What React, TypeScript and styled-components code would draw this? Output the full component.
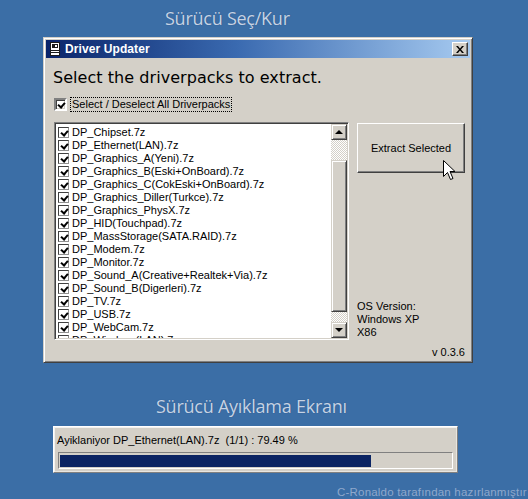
import React from "react";
import styled, { createGlobalStyle } from "styled-components";

const driverpacks: string[] = [
	"DP_Chipset.7z",
	"DP_Ethernet(LAN).7z",
	"DP_Graphics_A(Yeni).7z",
	"DP_Graphics_B(Eski+OnBoard).7z",
	"DP_Graphics_C(CokEski+OnBoard).7z",
	"DP_Graphics_Diller(Turkce).7z",
	"DP_Graphics_PhysX.7z",
	"DP_HID(Touchpad).7z",
	"DP_MassStorage(SATA.RAID).7z",
	"DP_Modem.7z",
	"DP_Monitor.7z",
	"DP_Sound_A(Creative+Realtek+Via).7z",
	"DP_Sound_B(Digerleri).7z",
	"DP_TV.7z",
	"DP_USB.7z",
	"DP_WebCam.7z",
	"DP_Wireless(LAN).7z",
];

const progress = 79.49;

function App() {
	return (
		<>
			<GlobalStyle />
			<Page>
				<SectionTitle $indent={165} $top={7} $bottom={8}>
					Sürücü Seç/Kur
				</SectionTitle>

				<Window>
					<TitleBar>
						<AppIcon width="10" height="14" viewBox="0 0 10 14">
							<rect x="0.5" y="0.5" width="9" height="13" fill="#fff" stroke="#1c1c1c" />
							<rect x="2" y="2" width="6" height="4" fill="#1c1c1c" />
							<rect x="5" y="3" width="2" height="2" fill="#fff" />
							<line x1="1" y1="8.5" x2="9" y2="8.5" stroke="#1c1c1c" />
							<line x1="1" y1="10.5" x2="9" y2="10.5" stroke="#1c1c1c" />
						</AppIcon>
						<TitleText>Driver Updater</TitleText>
						<CloseButton>
							<svg width="8" height="7" viewBox="0 0 8 7">
								<path d="M0 0h2l2 2.5L6 0h2L5 3.5 8 7H6L4 4.5 2 7H0l3-3.5z" fill="#000" />
							</svg>
						</CloseButton>
					</TitleBar>

					<Body>
						<Heading>Select the driverpacks to extract.</Heading>

						<SelectAllRow>
							<CheckBox $size={13} $checked />
							<FocusLabel>Select / Deselect All Driverpacks</FocusLabel>
						</SelectAllRow>

						<Content>
							<ListBox>
								<ListItems>
									{driverpacks.map((name) => (
										<ListRow key={name}>
											<CheckBox $size={11} $checked $flat />
											<span>{name}</span>
										</ListRow>
									))}
								</ListItems>
								<ScrollBar>
									<ScrollArrow $dir="up" />
									<ScrollTrack $size={20} />
									<ScrollThumb $size={152} />
									<ScrollTrack $size={10} />
									<ScrollArrow $dir="down" />
								</ScrollBar>
							</ListBox>

							<Side>
								<ExtractButton>Extract Selected</ExtractButton>
								<Cursor width="13" height="20" viewBox="0 0 13 20">
									<path
										d="M0.5 0.5 L0.5 16.5 L4.5 12.5 L7.5 19.5 L10 18.5 L7 11.5 L12 11.5 Z"
										fill="#fff"
										stroke="#000"
										strokeLinejoin="miter"
									/>
								</Cursor>
								<OsInfo>
									<div>OS Version:</div>
									<div>Windows XP</div>
									<div>X86</div>
								</OsInfo>
								<Version>v 0.3.6</Version>
							</Side>
						</Content>
					</Body>
				</Window>

				<SectionTitle $indent={156} $top={32} $bottom={9}>
					Sürücü Ayıklama Ekranı
				</SectionTitle>

				<ProgressPanel>
					<ProgressText>Ayiklaniyor DP_Ethernet(LAN).7z  (1/1) : 79.49 %</ProgressText>
					<ProgressBar>
						<ProgressFill $percent={progress} />
					</ProgressBar>
				</ProgressPanel>

				<Credit>C-Ronaldo tarafından hazırlanmıştır</Credit>
			</Page>
		</>
	);
}

const GlobalStyle = createGlobalStyle`
	html, body {
		margin: 0;
		padding: 0;
		background: #3a6ea5;
		overflow: hidden;
	}
	body {
		font-family: "Liberation Sans", Arial, sans-serif;
	}
`;

const Page = styled.div`
	width: 528px;
	height: 499px;
	display: flex;
	flex-direction: column;
	background: #3b6ea6;
	overflow: hidden;
`;

const SectionTitle = styled.div<{ $indent: number; $top: number; $bottom: number }>`
	padding-left: ${(p) => p.$indent}px;
	margin-top: ${(p) => p.$top}px;
	margin-bottom: ${(p) => p.$bottom}px;
	font-family: "Open Sans", "Noto Sans", sans-serif;
	font-size: 18px;
	line-height: 22px;
	letter-spacing: -0.25px;
	color: #c6d3e5;
	text-shadow: 0 0 1px rgba(20, 50, 90, 0.5);
	white-space: nowrap;
`;

const Window = styled.div`
	margin-left: 43px;
	width: 430px;
	height: 328px;
	box-sizing: border-box;
	display: flex;
	flex-direction: column;
	background: #d4d0c8;
	border: 1px solid;
	border-color: #d4d0c8 #404040 #404040 #d4d0c8;
	box-shadow: inset 1px 1px #ffffff, inset -1px -1px #808080;
	padding: 2px;
	overflow: hidden;
`;

const TitleBar = styled.div`
	height: 18px;
	flex: none;
	display: flex;
	align-items: center;
	padding: 0 2px 0 4px;
	background: linear-gradient(to right, #0a246a 0%, #3a6ab0 45%, #a6caf0 100%);
`;

const AppIcon = styled.svg`
	flex: none;
	margin-right: 5px;
`;

const TitleText = styled.span`
	flex: 1;
	color: #ffffff;
	font-family: "Liberation Sans", Arial, sans-serif;
	font-weight: bold;
	font-size: 12px;
	letter-spacing: 0.1px;
`;

const CloseButton = styled.div`
	width: 16px;
	height: 14px;
	box-sizing: border-box;
	display: flex;
	align-items: center;
	justify-content: center;
	background: #d4d0c8;
	border: 1px solid;
	border-color: #ffffff #404040 #404040 #ffffff;
	box-shadow: inset -1px -1px #808080;
`;

const Body = styled.div`
	flex: 1;
	display: flex;
	flex-direction: column;
	padding: 9px 4px 0 7px;
	color: #000;
	font-size: 11px;
`;

const Heading = styled.div`
	font-family: "DejaVu Sans", Verdana, sans-serif;
	font-size: 16px;
	line-height: 22px;
	letter-spacing: 0.05px;
	white-space: nowrap;
`;

const SelectAllRow = styled.div`
	display: flex;
	align-items: center;
	height: 13px;
	margin: 9px 0 11px 1px;
	gap: 4px;
`;

const CheckBox = styled.span<{ $size: number; $checked?: boolean; $flat?: boolean }>`
	flex: none;
	position: relative;
	width: ${(p) => p.$size}px;
	height: ${(p) => p.$size}px;
	box-sizing: border-box;
	background: #ffffff;
	border: ${(p) => (p.$flat ? 1 : 2)}px solid;
	border-color: ${(p) =>
		p.$flat ? "#404040 #909090 #909090 #404040" : "#808080 #ffffff #ffffff #808080"};
	box-shadow: ${(p) => (p.$flat ? "none" : "inset 1px 1px #404040, inset -1px -1px #d4d0c8")};

	&::after {
		content: "";
		display: ${(p) => (p.$checked ? "block" : "none")};
		position: absolute;
		left: 2.5px;
		top: 0.5px;
		width: 3px;
		height: 5px;
		border: solid #000;
		border-width: 0 2px 2px 0;
		transform: rotate(40deg);
	}
`;

const FocusLabel = styled.span`
	font-size: 11px;
	line-height: 13px;
	outline: 1px dotted #000;
	outline-offset: 0;
	padding: 0 1px;
`;

const Content = styled.div`
	display: grid;
	grid-template-columns: 295px 109px;
	column-gap: 8px;
	align-items: start;
	margin-left: 1px;
`;

const ListBox = styled.div`
	height: 218px;
	box-sizing: border-box;
	display: flex;
	background: #ffffff;
	border: 1px solid;
	border-color: #808080 #ffffff #ffffff #808080;
	box-shadow: inset 1px 1px #404040, inset -1px -1px #d4d0c8;
	padding: 1px;
	overflow: hidden;
`;

const ListItems = styled.div`
	flex: 1;
	padding: 2px 0 0 2px;
	overflow: hidden;
`;

const ListRow = styled.div`
	display: flex;
	align-items: center;
	gap: 3px;
	height: 13px;
	font-size: 11px;
	line-height: 13px;
	white-space: nowrap;
`;

const ScrollBar = styled.div`
	width: 16px;
	flex: none;
	display: flex;
	flex-direction: column;
`;

const ScrollArrow = styled.div<{ $dir: "up" | "down" }>`
	width: 16px;
	height: 16px;
	box-sizing: border-box;
	display: flex;
	align-items: center;
	justify-content: center;
	background: #d4d0c8;
	border: 1px solid;
	border-color: #d4d0c8 #404040 #404040 #d4d0c8;
	box-shadow: inset 1px 1px #ffffff, inset -1px -1px #808080;

	&::before {
		content: "";
		width: 0;
		height: 0;
		border-left: 4px solid transparent;
		border-right: 4px solid transparent;
		${(p) => (p.$dir === "up" ? "border-bottom: 4px solid #000;" : "border-top: 4px solid #000;")}
	}
`;

const ScrollTrack = styled.div<{ $size: number }>`
	height: ${(p) => p.$size}px;
	background-color: #ffffff;
	background-image: repeating-conic-gradient(#d4d0c8 0% 25%, #ffffff 0% 50%);
	background-size: 2px 2px;
`;

const ScrollThumb = styled(ScrollArrow).attrs({ $dir: "up" as const })<{ $size: number }>`
	height: ${(p) => p.$size}px;

	&::before {
		display: none;
	}
`;

const Side = styled.div`
	position: relative;
	display: flex;
	flex-direction: column;
	padding: 1px 1px 0 0;
`;

const ExtractButton = styled.div`
	height: 50px;
	box-sizing: border-box;
	display: flex;
	align-items: center;
	justify-content: center;
	background: #d4d0c8;
	border: 1px solid;
	border-color: #ffffff #404040 #404040 #ffffff;
	box-shadow: inset -1px -1px #808080;
	font-size: 11px;
`;

const Cursor = styled.svg`
	position: absolute;
	left: 86px;
	top: 38px;
`;

const OsInfo = styled.div`
	margin-top: 127px;
	font-size: 11px;
	line-height: 13px;
`;

const Version = styled.div`
	margin-top: 7px;
	text-align: right;
	font-size: 11px;
	line-height: 13px;
`;

const ProgressPanel = styled.div`
	margin-left: 53px;
	width: 405px;
	height: 47px;
	box-sizing: border-box;
	display: flex;
	flex-direction: column;
	background: #d4d0c8;
	border: 1px solid;
	border-color: #ffffff #808080 #808080 #ffffff;
	box-shadow: inset 1px 1px #f4f2ee, inset -1px -1px #e8e6e0;
	padding: 7px 3px 0 3px;
`;

const ProgressText = styled.div`
	font-size: 11px;
	line-height: 13px;
	white-space: pre;
	color: #000;
`;

const ProgressBar = styled.div`
	margin: 5px 1px 0 1px;
	height: 17px;
	box-sizing: border-box;
	border: 1px solid;
	border-color: #808080 #ffffff #ffffff #808080;
	padding: 2px 1px 1px 1px;
`;

const ProgressFill = styled.div<{ $percent: number }>`
	width: ${(p) => p.$percent}%;
	height: 100%;
	background: #0b2463;
`;

const Credit = styled.div`
	margin: 12px 0 0 337px;
	font-family: "Liberation Sans", Arial, sans-serif;
	font-size: 11.5px;
	line-height: 14px;
	color: #8fa8cc;
	white-space: nowrap;
	letter-spacing: 0.2px;
`;

export default App;
